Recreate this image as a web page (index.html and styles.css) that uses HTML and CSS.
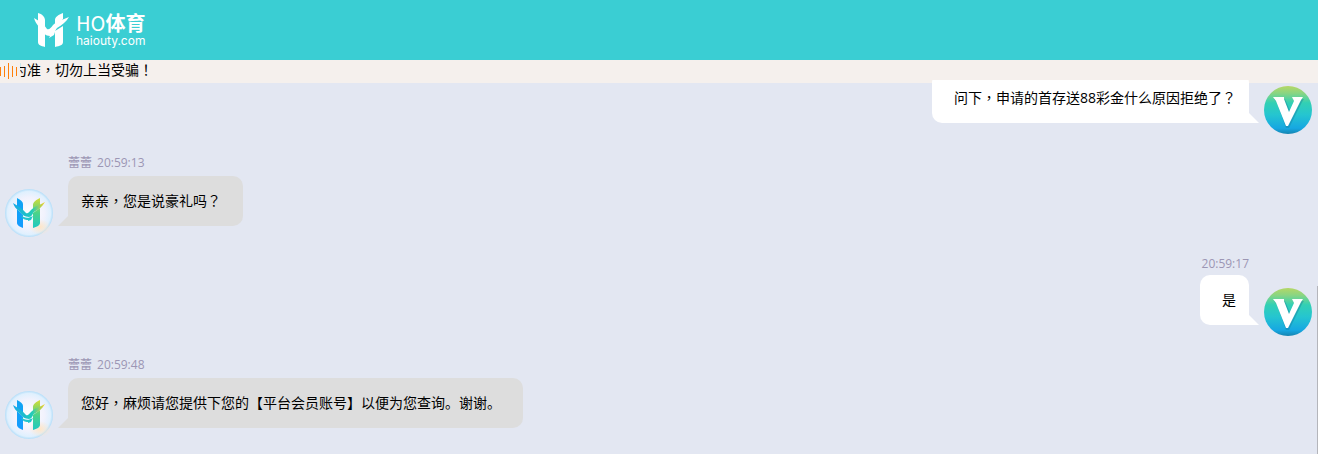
FILE: index.html
```
<!DOCTYPE html>
<html lang="zh-CN">
<head>
  <meta charset="UTF-8" />
  <meta name="viewport" content="width=device-width, initial-scale=1.0"/>
  <title>HO体育</title>
  <link rel="stylesheet" href="styles.css">
</head>
<body>
  <!-- Shared shapes -->
  <svg class="defs" width="0" height="0" aria-hidden="true">
    <defs>
      <linearGradient id="left-fill" x1="0" y1="0" x2="0" y2="1">
        <stop offset="0" stop-color="#10a5f2"/>
        <stop offset="1" stop-color="#159bff"/>
      </linearGradient>
      <linearGradient id="right-fill" x1="0" y1="0" x2="0" y2="1">
        <stop offset="0" stop-color="#d8dc35"/>
        <stop offset="0.5" stop-color="#4bd389"/>
        <stop offset="1" stop-color="#1fc9c4"/>
      </linearGradient>
      <linearGradient id="wing-fill" x1="0" y1="0" x2="1" y2="0">
        <stop offset="0" stop-color="#18a9e8"/>
        <stop offset="0.6" stop-color="#22ccb9"/>
        <stop offset="1" stop-color="#ffd21a"/>
      </linearGradient>
      <radialGradient id="pearl-fill">
        <stop offset="0" stop-color="#ffffff"/>
        <stop offset="0.65" stop-color="#f1f2fd"/>
        <stop offset="0.9" stop-color="#dff0fe"/>
        <stop offset="1" stop-color="#b4def9"/>
      </radialGradient>
      <radialGradient id="warm-fill">
        <stop offset="0" stop-color="#ffe6c8"/>
        <stop offset="1" stop-color="#ffe6c8" stop-opacity="0"/>
      </radialGradient>
      <linearGradient id="user-fill" x1="0" y1="0" x2="0" y2="1">
        <stop offset="0" stop-color="#b5d766"/>
        <stop offset="0.15" stop-color="#8ad582"/>
        <stop offset="0.35" stop-color="#32d0b4"/>
        <stop offset="0.6" stop-color="#25c5d0"/>
        <stop offset="0.88" stop-color="#16a7e2"/>
        <stop offset="1" stop-color="#1684b0"/>
      </linearGradient>
    </defs>
    <symbol id="bird-logo" viewBox="0 0 36 36">
      <path d="M4 1 C8 2 11 5 11 8 V15 L4 9 Z M4 13 L11 19 V35 C7 34 4 33 4 30 Z"/>
      <path d="M29 1 C24 3 21 5 21 8 V14 L29 7 Z M29 14 L21 19 V35 C26 34 29 33 29 30 Z"/>
      <path d="M0 6 C5 9 10 12 13 17 C15 18 17 16 19 13 C23 9 28 8 35 5 C32 10 28 13 23 16 C21 18 21 21 20 23 L15 26 L16 24 C12 24 8 21 5 15 C3 12 1 10 0 6 Z"/>
    </symbol>
    <symbol id="agent-avatar" viewBox="0 0 48 48">
      <circle cx="24" cy="24" r="24" fill="url(#pearl-fill)"/>
      <ellipse cx="35" cy="38" rx="11" ry="8" fill="url(#warm-fill)"/>
      <path fill="url(#left-fill)" d="M12 9 C16 11 18 13 18 15 V22 L12 17 Z M12 20 L18 26 V39 C15 38 12 36 12 34 Z"/>
      <path fill="url(#right-fill)" d="M35 9 C31 11 28 13 28 16 V21 L35 16 Z M35 19 L28 24 V39 C32 38 35 36 35 34 Z"/>
      <path fill="url(#wing-fill)" d="M8 14 C13 17 18 20 21 24 C23 25 24 23 26 21 C30 17 35 16 40 13 C37 18 33 21 29 23 C27 25 27 28 24 28 C20 28 16 25 14 22 C11 20 9 17 8 14 Z"/>
      <path fill="#22c5cc" d="M16 26 C19 29 23 30 28 27 L26 31 L23 32 L23 31 C20 31 17 30 16 26 Z"/>
    </symbol>
    <symbol id="user-avatar" viewBox="0 0 48 48">
      <circle cx="24" cy="24" r="24" fill="url(#user-fill)"/>
      <path fill="#147b9d" opacity="0.4" d="M10 13 H21 L27 27 L31 17 L29 13 H40 L38 16 L25 42 H22 L13 17 Z"/>
      <path fill="#fff" d="M9 11 H20 L20 13 L25 26 L30 15 L28 11 H39 L37 14 L24 40 H22 L12 15 Z"/>
    </symbol>
  </svg>

  <header class="header">
    <svg class="logo-mark" aria-hidden="true"><use href="#bird-logo"/></svg>
    <div class="logo-text">
      <span class="logo-name">HO<b>体育</b></span>
      <span class="logo-domain">haiouty.com</span>
    </div>
  </header>

  <div class="notice">
    <svg class="notice-icon" viewBox="0 0 20 22" aria-hidden="true">
      <path d="M0.5 7V16 M4.5 6V17 M8.5 3V19 M12.5 6V17 M16.5 7V16"/>
    </svg>
    <div class="notice-view">
      <p class="notice-text">为准<span class="mark" lang="zh-TW">，</span>切勿上当受骗<span class="mark" lang="zh-TW">！</span></p>
    </div>
  </div>

  <main class="chat">
    <article class="message self">
      <div class="row">
        <p class="bubble">问下<span class="mark" lang="zh-TW">，</span>申请的首存送88彩金什么原因拒绝了<span class="mark" lang="zh-TW">？</span></p>
        <svg class="avatar" aria-hidden="true"><use href="#user-avatar"/></svg>
      </div>
    </article>

    <article class="message">
      <div class="meta"><span>蕾蕾</span><time>20:59:13</time></div>
      <div class="row">
        <svg class="avatar" aria-hidden="true"><use href="#agent-avatar"/></svg>
        <p class="bubble">亲亲<span class="mark" lang="zh-TW">，</span>您是说豪礼吗<span class="mark" lang="zh-TW">？</span></p>
      </div>
    </article>

    <article class="message self">
      <div class="meta"><time>20:59:17</time></div>
      <div class="row">
        <p class="bubble">是</p>
        <svg class="avatar" aria-hidden="true"><use href="#user-avatar"/></svg>
      </div>
    </article>

    <article class="message">
      <div class="meta"><span>蕾蕾</span><time>20:59:48</time></div>
      <div class="row">
        <svg class="avatar" aria-hidden="true"><use href="#agent-avatar"/></svg>
        <p class="bubble">您好<span class="mark" lang="zh-TW">，</span>麻烦请您提供下您的【平台会员账号】以便为您查询。谢谢。</p>
      </div>
    </article>
    <div class="scroll-thumb"></div>
  </main>
</body>
</html>
```
FILE: styles.css
```
/* Reset & Base Styles */
* {
  box-sizing: border-box;
  margin: 0;
  padding: 0;
}

body {
  font-family: "Open Sans", "Noto Sans CJK SC", sans-serif;
  font-size: 14px;
  color: #000;
  background-color: #e3e7f2;
  display: flex;
  flex-direction: column;
  height: 100vh;
  overflow: hidden;
}

.defs {
  position: absolute;
}

/* Full-width punctuation centred in its cell */
.mark {
  font-family: "Noto Sans CJK TC", sans-serif;
  line-height: 1;
}

/* Header */
.header {
  display: flex;
  align-items: center;
  gap: 6px;
  flex: none;
  height: 60px;
  padding-left: 34px;
  background-color: #3aced3;
  color: #fff;
}

.logo-mark {
  width: 36px;
  height: 36px;
  fill: #fff;
}

.logo-text {
  display: flex;
  flex-direction: column;
}

.logo-name {
  font-family: "Noto Sans CJK SC", sans-serif;
  font-size: 20px;
  line-height: 22px;
}

.logo-domain {
  font-family: Inter, sans-serif;
  font-size: 12px;
  line-height: 14px;
}

/* Notice bar */
.notice {
  display: flex;
  flex: none;
  height: 23px;
  background-color: #f5f0ed;
}

.notice-icon {
  flex: none;
  width: 20px;
  height: 22px;
  fill: none;
  stroke: #ff7f0a;
}

.notice-view {
  flex: 1;
  overflow: hidden;
}

.notice-text {
  margin-left: -7px;
  line-height: 20px;
  white-space: nowrap;
}

/* Chat: pinned to the newest message, slides under the notice bar */
.chat {
  position: relative;
  display: flex;
  flex-direction: column;
  justify-content: flex-end;
  flex: 1;
  min-height: 0;
  margin-top: -3px;
  padding: 0 6px 15px 5px;
  overflow: hidden;
}

.message {
  flex: none;
  margin-top: 21px;
}

.message.self {
  margin-top: 19px;
}

.meta {
  display: flex;
  gap: 5px;
  margin-bottom: 5px;
  padding: 0 63px;
  font-size: 12px;
  line-height: 16px;
  color: #9c96b4;
}

.self .meta {
  justify-content: flex-end;
  margin-bottom: 3px;
}

.row {
  display: flex;
  align-items: flex-start;
  gap: 15px;
}

.self .row {
  justify-content: flex-end;
}

.avatar {
  flex: none;
  width: 48px;
  height: 48px;
  margin-top: 13px;
}

.bubble {
  position: relative;
  padding: 14px 22px 14px 13px;
  border-radius: 10px 10px 10px 0;
  line-height: 22px;
  background-color: #ddd;
}

.self .bubble {
  padding: 14px 13px 14px 22px;
  border-radius: 10px 10px 0 10px;
  background-color: #fff;
}

/* Bubble tails */
.bubble::after {
  content: "";
  position: absolute;
  bottom: 0;
  left: -10px;
  border-left: 10px solid transparent;
  border-bottom: 10px solid #ddd;
}

.self .bubble::after {
  left: auto;
  right: -10px;
  border-left: none;
  border-right: 10px solid transparent;
  border-bottom-color: #fff;
}

.scroll-thumb {
  position: absolute;
  right: 0;
  bottom: 0;
  width: 1px;
  height: 45%;
  background-color: #b4b5bb;
}
```
